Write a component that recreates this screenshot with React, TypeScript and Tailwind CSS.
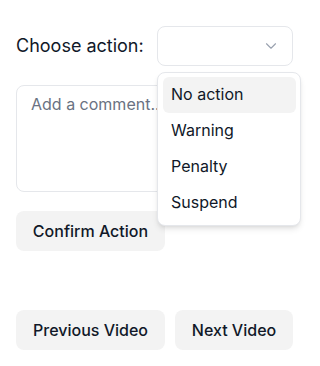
import { ChevronDown } from "lucide-react";

const OPTIONS = ["No action", "Warning", "Penalty", "Suspend"];

export default function App() {
  return (
    <div
      className="w-[306px] h-[366px] bg-white pl-4 pr-[13px] pt-[26px] text-gray-900"
      style={{ fontFamily: "Inter, 'Noto Sans', sans-serif" }}
    >
      <div className="flex items-center justify-between">
        <label className="text-[18px] leading-6">Choose action:</label>
        <div className="relative w-[136px]">
          <button className="flex h-10 w-full items-center justify-end rounded-lg border border-gray-200 bg-white pr-3">
            <ChevronDown size={18} strokeWidth={1.5} className="text-gray-400" />
          </button>
          <div className="absolute left-0 top-[46px] z-10 w-[144px] rounded-lg border border-gray-200 bg-white py-1 pl-[5px] pr-1 shadow-md">
            {OPTIONS.map((o, i) => (
              <div
                key={o}
                className={`flex h-9 items-center rounded-md px-2 pb-[2px] text-base ${
                  i === 0 ? "bg-[#f3f3f3]" : ""
                }`}
              >
                {o}
              </div>
            ))}
          </div>
        </div>
      </div>

      <textarea
        placeholder="Add a comment..."
        className="mt-[19px] block h-[107px] w-full resize-none rounded-lg border border-gray-200 px-[14px] py-[6px] text-base leading-6 placeholder:text-gray-500 outline-none"
      />

      <button className="mt-[19px] h-10 w-[149px] rounded-lg bg-[#f3f3f3] text-base font-medium">
        Confirm Action
      </button>

      <div className="mt-[59px] flex gap-[10px]">
        <button className="h-10 w-[149px] rounded-lg bg-[#f3f3f3] text-base font-medium">
          Previous Video
        </button>
        <button className="h-10 flex-1 rounded-lg bg-[#f3f3f3] text-base font-medium">
          Next Video
        </button>
      </div>
    </div>
  );
}
